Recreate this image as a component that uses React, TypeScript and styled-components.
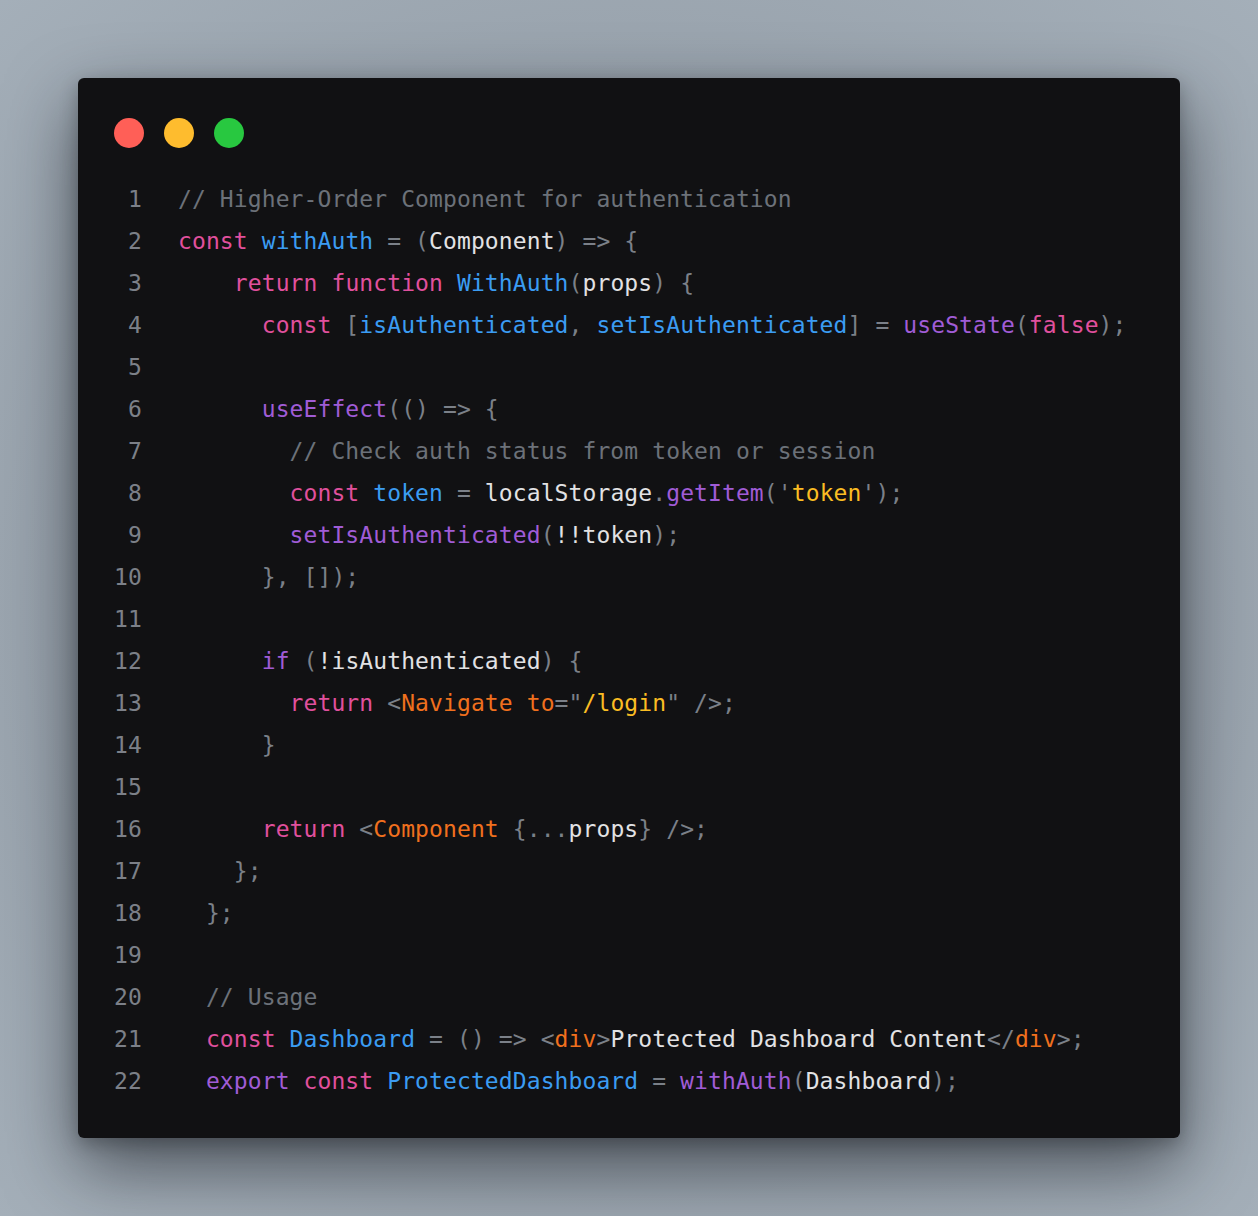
import React from "react";
import styled, { createGlobalStyle } from "styled-components";

const Global = createGlobalStyle`
  html, body { margin: 0; padding: 0; }
  body {
    width: 1258px;
    height: 1216px;
    background: radial-gradient(ellipse 80% 75% at 50% 50%, #8c959e 0%, #98a2ac 55%, #a7b2bc 100%);
    font-family: "DejaVu Sans Mono", monospace;
  }
`;

const Stage = styled.div`
  width: 1258px;
  height: 1216px;
  box-sizing: border-box;
  padding: 78px 78px 0 78px;
`;

const Card = styled.div`
  width: 1102px;
  height: 1060px;
  box-sizing: border-box;
  background: #111113;
  border-radius: 6px;
  box-shadow: 0 28px 70px rgba(20, 24, 30, 0.6), 0 6px 18px rgba(0, 0, 0, 0.25);
  padding: 40px 36px 36px 36px;
  display: flex;
  flex-direction: column;
`;

const Dots = styled.div`
  display: flex;
  gap: 20px;
  height: 30px;
  margin-bottom: 30px;
`;

const Dot = styled.span<{ $c: string }>`
  width: 30px;
  height: 30px;
  border-radius: 50%;
  background: ${(p) => p.$c};
`;

const Code = styled.div`
  display: flex;
  flex-direction: column;
`;

const Line = styled.div`
  display: flex;
  height: 42px;
  align-items: center;
  font-size: 23px;
  letter-spacing: 0.1px;
  white-space: pre;
`;

const Num = styled.span`
  width: 28px;
  text-align: right;
  color: #7c8088;
  margin-right: 36px;
  flex: none;
`;

const colors: Record<string, string> = {
  c: "#6c7179",
  k: "#e0509d",
  v: "#3b9cf2",
  f: "#a05cd6",
  t: "#f0701e",
  s: "#fbbd23",
  p: "#7b8088",
  x: "#e2e2e4",
};

const Tok = styled.span<{ $k: string }>`
  color: ${(p) => colors[p.$k]};
`;

type T = [string, string];
const lines: T[][] = [
  [["c", "// Higher-Order Component for authentication"]],
  [["k", "const"], ["v", " withAuth"], ["p", " = ("], ["x", "Component"], ["p", ") => {"]],
  [["k", "    return"], ["k", " function"], ["v", " WithAuth"], ["p", "("], ["x", "props"], ["p", ") {"]],
  [["k", "      const"], ["p", " ["], ["v", "isAuthenticated"], ["p", ", "], ["v", "setIsAuthenticated"], ["p", "] = "], ["f", "useState"], ["p", "("], ["k", "false"], ["p", ");"]],
  [],
  [["f", "      useEffect"], ["p", "(() => {"]],
  [["c", "        // Check auth status from token or session"]],
  [["k", "        const"], ["v", " token"], ["p", " = "], ["x", "localStorage"], ["p", "."], ["f", "getItem"], ["p", "('"], ["s", "token"], ["p", "');"]],
  [["f", "        setIsAuthenticated"], ["p", "("], ["x", "!!token"], ["p", ");"]],
  [["p", "      }, []);"]],
  [],
  [["f", "      if"], ["p", " ("], ["x", "!isAuthenticated"], ["p", ") {"]],
  [["k", "        return"], ["p", " <"], ["t", "Navigate"], ["p", " "], ["t", "to"], ["p", "=\""], ["s", "/login"], ["p", "\" />;"]],
  [["p", "      }"]],
  [],
  [["k", "      return"], ["p", " <"], ["t", "Component"], ["p", " {..."], ["x", "props"], ["p", "} />;"]],
  [["p", "    };"]],
  [["p", "  };"]],
  [],
  [["c", "  // Usage"]],
  [["k", "  const"], ["v", " Dashboard"], ["p", " = () => <"], ["t", "div"], ["p", ">"], ["x", "Protected Dashboard Content"], ["p", "</"], ["t", "div"], ["p", ">;"]],
  [["f", "  export"], ["k", " const"], ["v", " ProtectedDashboard"], ["p", " = "], ["f", "withAuth"], ["p", "("], ["x", "Dashboard"], ["p", ");"]],
];

export default function App() {
  return (
    <>
      <Global />
      <Stage>
        <Card>
          <Dots>
            <Dot $c="#ff5f57" />
            <Dot $c="#febc2e" />
            <Dot $c="#28c840" />
          </Dots>
          <Code>
            {lines.map((l, i) => (
              <Line key={i}>
                <Num>{i + 1}</Num>
                {l.map(([k, s], j) => (
                  <Tok key={j} $k={k}>
                    {s}
                  </Tok>
                ))}
              </Line>
            ))}
          </Code>
        </Card>
      </Stage>
    </>
  );
}
